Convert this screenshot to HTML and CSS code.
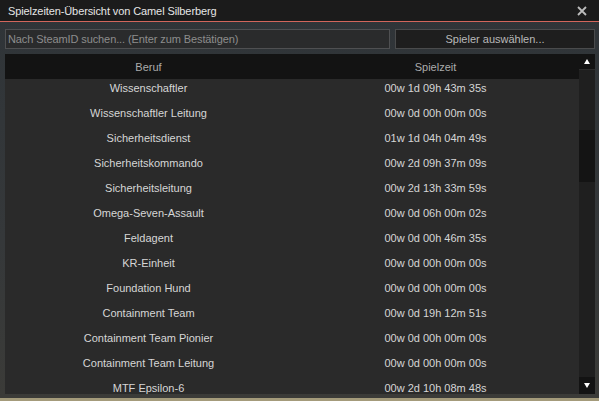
FILE: index.html
```html
<!DOCTYPE html>
<html lang="de">
<head>
    <meta charset="UTF-8">
    <title>Spielzeiten-Übersicht</title>
    <link rel="stylesheet" href="styles.css">
</head>
<body>
    <div class="frame">
        <div class="titlebar">
            <span class="title">Spielzeiten-Übersicht von Camel Silberberg</span>
            <svg class="close" width="10" height="10" viewBox="0 0 10 10">
                <path d="M1 1 L9 9 M9 1 L1 9" stroke="#bdbdbd" stroke-width="1.8"/>
            </svg>
        </div>

        <div class="toolbar">
            <input type="text" class="search" placeholder="Nach SteamID suchen... (Enter zum Bestätigen)">
            <button class="pick">Spieler auswählen...</button>
        </div>

        <div class="list">
            <div class="list-main">
                <div class="list-head">
                    <div class="cell">Beruf</div>
                    <div class="cell">Spielzeit</div>
                </div>
                <div class="list-body">
                    <div class="rows">
                        <div class="row"><div class="cell">Wissenschaftler</div><div class="cell">00w 1d 09h 43m 35s</div></div>
                        <div class="row"><div class="cell">Wissenschaftler Leitung</div><div class="cell">00w 0d 00h 00m 00s</div></div>
                        <div class="row"><div class="cell">Sicherheitsdienst</div><div class="cell">01w 1d 04h 04m 49s</div></div>
                        <div class="row"><div class="cell">Sicherheitskommando</div><div class="cell">00w 2d 09h 37m 09s</div></div>
                        <div class="row"><div class="cell">Sicherheitsleitung</div><div class="cell">00w 2d 13h 33m 59s</div></div>
                        <div class="row"><div class="cell">Omega-Seven-Assault</div><div class="cell">00w 0d 06h 00m 02s</div></div>
                        <div class="row"><div class="cell">Feldagent</div><div class="cell">00w 0d 00h 46m 35s</div></div>
                        <div class="row"><div class="cell">KR-Einheit</div><div class="cell">00w 0d 00h 00m 00s</div></div>
                        <div class="row"><div class="cell">Foundation Hund</div><div class="cell">00w 0d 00h 00m 00s</div></div>
                        <div class="row"><div class="cell">Containment Team</div><div class="cell">00w 0d 19h 12m 51s</div></div>
                        <div class="row"><div class="cell">Containment Team Pionier</div><div class="cell">00w 0d 00h 00m 00s</div></div>
                        <div class="row"><div class="cell">Containment Team Leitung</div><div class="cell">00w 0d 00h 00m 00s</div></div>
                        <div class="row"><div class="cell">MTF Epsilon-6</div><div class="cell">00w 2d 10h 08m 48s</div></div>
                    </div>
                </div>
            </div>
            <div class="scrollbar">
                <div class="sb-btn sb-up"><span class="arrow-up"></span></div>
                <div class="sb-track"><div class="sb-thumb"></div></div>
                <div class="sb-btn sb-down"><span class="arrow-down"></span></div>
            </div>
        </div>
    </div>
</body>
</html>
```

FILE: styles.css
```css
body {
    margin: 0;
    background-color: #a49b7b;
    font-family: "Liberation Sans", Arial, sans-serif;
    font-size: 11px;
}

.frame {
    width: 599px;
    height: 398px;
    background: linear-gradient(#2f3438, #35383a 60%, #3b3b38);
}

.titlebar {
    display: flex;
    align-items: center;
    height: 22px;
    padding: 1px 12px 0 8px;
    box-sizing: border-box;
    background-color: #1b1b1b;
    border-bottom: 1px solid #d2665c;
}

.title {
    color: #e6e6e6;
    font-size: 11px;
    letter-spacing: -0.1px;
}

.close {
    margin-left: auto;
}

.toolbar {
    display: flex;
    gap: 5px;
    padding: 7px 4px 0 5px;
}

.search {
    width: 385px;
    height: 20px;
    box-sizing: border-box;
    margin: 0;
    padding: 0 2px;
    border: 1px solid #4f5052;
    background-color: #2a2b2c;
    color: #dddddd;
    font-family: inherit;
    font-size: 11px;
    letter-spacing: -0.1px;
    outline: none;
}

.search::placeholder {
    color: #8d8d8d;
}

.pick {
    width: 200px;
    height: 20px;
    box-sizing: border-box;
    margin: 0;
    border: 1px solid #4a4b4c;
    background-color: #1e1e1e;
    color: #b9b9b9;
    font-family: inherit;
    font-size: 11px;
}

.list {
    display: flex;
    height: 340px;
    margin: 5px 4px 0 5px;
}

.list-main {
    flex: 1;
    display: flex;
    flex-direction: column;
    background-color: #2a2a2a;
}

.list-head {
    display: flex;
    height: 25px;
    align-items: center;
    background-color: #131313;
    color: #ababab;
}

.cell {
    flex: 1;
    text-align: center;
}

.list-body {
    flex: 1;
    overflow: hidden;
}

.rows {
    margin-top: -3px;
}

.row {
    display: flex;
    height: 25px;
    line-height: 25px;
    color: #d6d6d6;
}

.scrollbar {
    width: 16px;
    display: flex;
    flex-direction: column;
    background-color: #1f1f1f;
}

.sb-btn {
    display: flex;
    align-items: center;
    justify-content: center;
    background-color: #131313;
}

.sb-up {
    height: 15px;
    border-bottom: 1px solid #2c2c2c;
}

.sb-down {
    height: 17px;
}

.sb-track {
    flex: 1;
    padding-top: 60px;
}

.sb-thumb {
    height: 52px;
    background-color: #141414;
}

.arrow-up {
    width: 0;
    height: 0;
    border-left: 3px solid transparent;
    border-right: 3px solid transparent;
    border-bottom: 5px solid #ffffff;
}

.arrow-down {
    width: 0;
    height: 0;
    border-left: 3px solid transparent;
    border-right: 3px solid transparent;
    border-top: 5px solid #ffffff;
}
```
